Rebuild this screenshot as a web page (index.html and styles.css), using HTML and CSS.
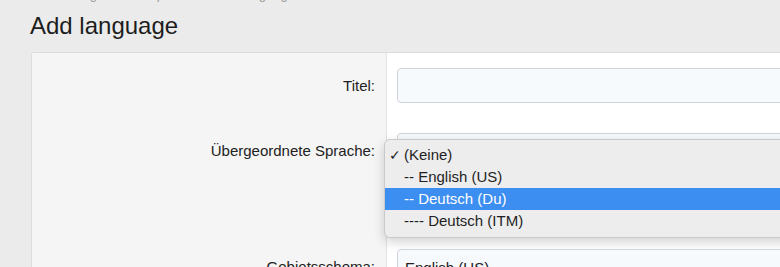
FILE: index.html
```html
<!DOCTYPE html>
<html lang="en">
<head>
    <meta charset="UTF-8">
    <title>Add language</title>
    <link rel="stylesheet" href="styles.css">
</head>
<body>
    <div class="breadcrumb">Konfiguration › Sprachen › Add language</div>
    <h1>Add language</h1>

    <div class="panel">
        <div class="row">
            <label class="label">Titel:</label>
            <div class="field">
                <div class="input"></div>
            </div>
        </div>

        <div class="row row-tall">
            <label class="label">Übergeordnete Sprache:</label>
            <div class="field">
                <div class="input select"></div>

                <!-- Open native dropdown -->
                <ul class="dropdown">
                    <li><span class="check">✓</span>(Keine)</li>
                    <li><span class="check"></span>-- English (US)</li>
                    <li class="active"><span class="check"></span>-- Deutsch (Du)</li>
                    <li><span class="check"></span>---- Deutsch (ITM)</li>
                </ul>
            </div>
        </div>

        <div class="row">
            <label class="label">Gebietsschema:</label>
            <div class="field">
                <div class="input select">English (US)</div>
            </div>
        </div>
    </div>
</body>
</html>
```

FILE: styles.css
```css
* {
    margin: 0;
    padding: 0;
    box-sizing: border-box;
}

body {
    background: #ebebeb;
    font-family: "Liberation Sans", Arial, sans-serif;
    color: #222;
    padding: 0 30px;
    overflow: hidden;
}

.breadcrumb {
    font-size: 13px;
    color: #9a9a9a;
    margin-top: -13px;
    padding-left: 30px;
    height: 14px;
}

h1 {
    font-size: 24px;
    font-weight: normal;
    color: #1d1d1d;
    margin: 11px 0 12px;
    line-height: 28px;
}

.panel {
    width: 1000px;
    margin-left: 1px;
    background: white;
    border: 1px solid #dcdcdc;
    border-radius: 3px 0 0 0;
}

.row {
    display: flex;
    height: 65px;
}

.row-tall {
    height: 116px;
}

.label {
    flex: 0 0 355px;
    background: #f5f5f5;
    border-right: 1px solid #e2e2e2;
    text-align: right;
    font-size: 15px;
    padding: 24px 11px 0 0;
}

.field {
    flex: 1;
    padding: 15px 10px;
    position: relative;
}

.input {
    height: 35px;
    background: #f7fafd;
    border: 1px solid #d2d4d8;
    border-radius: 4px;
    font-size: 15px;
    padding: 9px 7px;
}

.dropdown {
    position: absolute;
    top: 21px;
    left: -3px;
    right: 0;
    list-style: none;
    background: #ededed;
    border: 1px solid #c9c9c9;
    border-radius: 6px;
    box-shadow: 0 4px 12px rgba(0, 0, 0, 0.18);
    padding: 4px 0 5px;
    font-size: 15px;
    color: #1f1f1f;
}

.dropdown li {
    height: 22px;
    line-height: 22px;
    padding-left: 4px;
    display: flex;
}

.dropdown .check {
    width: 15px;
    font-size: 14px;
}

.dropdown li.active {
    background: #3d8ef1;
    color: white;
}
```
